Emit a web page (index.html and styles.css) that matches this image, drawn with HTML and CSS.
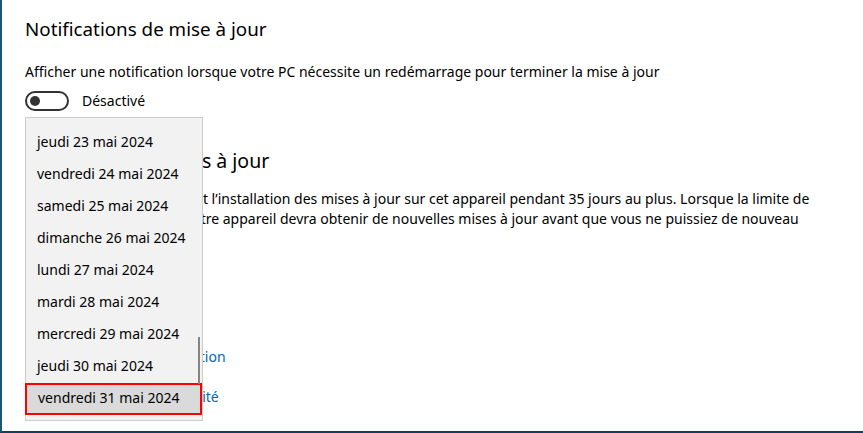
FILE: index.html
```html
<!DOCTYPE html>
<html lang="fr">
<head>
<meta charset="utf-8">
<title>Options avancées</title>
<link rel="stylesheet" href="styles.css">
</head>
<body>
<div class="frame">
  <main class="page">
    <h2 class="title t1">Notifications de mise à jour</h2>
    <p class="text">Afficher une notification lorsque votre PC nécessite un redémarrage pour terminer la mise à jour</p>
    <div class="toggle-row">
      <span class="toggle"><span class="knob"></span></span>
      <span class="text">Désactivé</span>
    </div>

    <h2 class="title t2">Suspendre les mises à jour</h2>
    <p class="text para">Suspendez temporairement l’installation des mises à jour sur cet appareil pendant 35 jours au plus. Lorsque la limite de suspension est atteinte, votre appareil devra obtenir de nouvelles mises à jour avant que vous ne puissiez de nouveau suspendre les mises à jour.</p>
    <p class="text label">Suspendre jusqu’à</p>
    <div class="combo">Sélectionner la date</div>

    <a class="link l1" href="#">Optimisation de la distribution</a>
    <a class="link l2" href="#">Paramètres de confidentialité</a>

    <ul class="dropdown">
      <li class="item">jeudi 23 mai 2024</li>
      <li class="item">vendredi 24 mai 2024</li>
      <li class="item">samedi 25 mai 2024</li>
      <li class="item">dimanche 26 mai 2024</li>
      <li class="item">lundi 27 mai 2024</li>
      <li class="item">mardi 28 mai 2024</li>
      <li class="item">mercredi 29 mai 2024</li>
      <li class="item">jeudi 30 mai 2024</li>
      <li class="item selected">vendredi 31 mai 2024</li>
      <li class="scrollbar"></li>
    </ul>
  </main>
</div>
</body>
</html>
```

FILE: styles.css
```css
* { box-sizing: border-box; }
html, body { margin: 0; padding: 0; background: #ffffff; }
body {
  font-family: "Noto Sans", "Open Sans", sans-serif;
  color: #000000;
  width: 863px;
  height: 433px;
  overflow: hidden;
}
.frame {
  width: 863px;
  height: 433px;
  border-left: 2px solid #1d5674;
  border-bottom: 2px solid #173c5f;
  overflow: hidden;
}
.page {
  position: relative;
  height: 100%;
  padding: 15px 0 0 23px;
  display: flex;
  flex-direction: column;
  align-items: flex-start;
}
.title {
  margin: 0;
  font-weight: 400;
  font-size: 18.8px;
  line-height: 28px;
}
.t2 { margin-top: 36px; font-size: 19.5px; }
.text {
  margin: 0;
  font-size: 14px;
  line-height: 20px;
}
.t1 + .text { margin-top: 19px; }
.toggle-row {
  display: flex;
  align-items: center;
  gap: 13px;
  margin-top: 9px;
}
.toggle {
  width: 44px;
  height: 20px;
  border: 2px solid #333333;
  border-radius: 10px;
  display: flex;
  align-items: center;
  padding-left: 3px;
}
.knob {
  width: 10px;
  height: 10px;
  border-radius: 50%;
  background: #333333;
}
.para {
  margin-top: 14px;
  width: 795px;
  line-height: 19.5px;
}
.label { margin-top: 20px; }
.combo {
  margin-top: 8px;
  width: 170px;
  height: 32px;
  border: 2px solid #999999;
  font-size: 14px;
  padding: 5px 10px;
}
.link {
  color: #0067b8;
  text-decoration: none;
  font-size: 14px;
  line-height: 20px;
}
.l1 { margin-top: 19px; }
.l2 { margin-top: 20px; }

.dropdown {
  position: absolute;
  left: 23px;
  top: 117px;
  width: 178px;
  margin: 0;
  padding: 9px 0 5px 0;
  list-style: none;
  background: #f2f2f2;
  border: 1px solid #cccccc;
}
.item {
  height: 32px;
  line-height: 30px;
  font-size: 14px;
  padding-left: 11px;
  white-space: nowrap;
}
.item.selected {
  margin-left: -1px;
  width: 177px;
  background: #dadada;
  border: 2px solid #ff0000;
  line-height: 26px;
}
.scrollbar {
  position: absolute;
  right: 2px;
  top: 219px;
  width: 2px;
  height: 47px;
  background: #858585;
}
```
